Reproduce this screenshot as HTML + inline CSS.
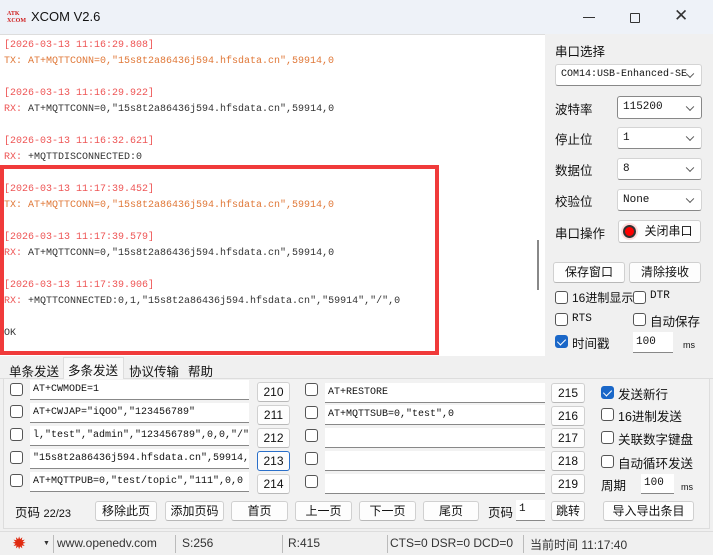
<!DOCTYPE html>
<html><head><meta charset="utf-8"><style>
*{box-sizing:border-box;margin:0;padding:0}
body{width:713px;height:555px;background:#f0f0f0;position:relative;overflow:hidden;font-family:"Liberation Sans","Noto Sans CJK SC",sans-serif;font-size:12px;color:#111}
.a{position:absolute;white-space:nowrap}
#title{left:0;top:0;width:713px;height:34px;background:#eef2f8}
#log{left:0;top:34px;width:545px;height:322px;background:#fff;border-top:1px solid #ddd;font-family:"Liberation Mono","Noto Sans CJK SC",monospace;font-size:10px;line-height:16px;padding:3px 0 0 4px}
#log div{height:16px;white-space:nowrap}
.ts{color:#ee5555}.tx{color:#e07838}.rx{color:#ee5555}.d{color:#333}
.btn{position:absolute;background:#fdfdfd;border:1px solid #d0d0d0;border-bottom-color:#b8b8b8;border-radius:3px;text-align:center;font-size:12px;font-family:"Liberation Sans","Noto Sans CJK SC",sans-serif}
.cmb{position:absolute;background:#fff;border:1px solid #d4d4d4;border-bottom-color:#888;border-radius:3px;font-family:"Liberation Mono","Noto Sans CJK SC",monospace;font-size:11px;padding-left:5px}
.cmb:after{content:"";position:absolute;right:8px;top:50%;width:5px;height:5px;border-right:1px solid #555;border-bottom:1px solid #555;transform:translateY(-70%) rotate(45deg)}
.cb{position:absolute;width:13px;height:13px;border:1px solid #555;border-radius:3px;background:#fff}
.cb.on{background:#1a67c8;border-color:#1a67c8}
.cb.on:after{content:"";position:absolute;left:3px;top:1px;width:4px;height:7px;border-right:1.5px solid #fff;border-bottom:1.5px solid #fff;transform:rotate(45deg)}
.inp{position:absolute;background:#fff;border-bottom:1px solid #888;font-family:"Liberation Mono","Noto Sans CJK SC",monospace;font-size:10px;padding-left:3px;overflow:hidden}
.lbl{position:absolute;white-space:nowrap;font-size:12.5px}
</style></head><body>
<div class="a" id="title"></div>
<div class="a" style="left:7px;top:11px;width:14px;height:14px;font-size:6px;line-height:7px;color:#d02020;font-weight:bold;font-family:'Liberation Serif',serif">ATK<br>XCOM</div>
<div class="a" style="left:31px;top:9px;font-size:13px">XCOM V2.6</div>
<div class="a" style="left:583px;top:17px;width:12px;height:1px;background:#333"></div>
<div class="a" style="left:630px;top:13px;width:10px;height:10px;border:1px solid #333;border-radius:1px"></div>
<div class="a" style="left:674px;top:6px;font-size:17px;color:#333">✕</div>

<div class="a" id="log">
<div class="ts">[2026-03-13 11:16:29.808]</div>
<div class="tx">TX: AT+MQTTCONN=0,"15s8t2a86436j594.hfsdata.cn",59914,0</div>
<div></div>
<div class="ts">[2026-03-13 11:16:29.922]</div>
<div class="d"><span class="rx">RX:</span> AT+MQTTCONN=0,"15s8t2a86436j594.hfsdata.cn",59914,0</div>
<div></div>
<div class="ts">[2026-03-13 11:16:32.621]</div>
<div class="d"><span class="rx">RX:</span> +MQTTDISCONNECTED:0</div>
<div></div>
<div class="ts">[2026-03-13 11:17:39.452]</div>
<div class="tx">TX: AT+MQTTCONN=0,"15s8t2a86436j594.hfsdata.cn",59914,0</div>
<div></div>
<div class="ts">[2026-03-13 11:17:39.579]</div>
<div class="d"><span class="rx">RX:</span> AT+MQTTCONN=0,"15s8t2a86436j594.hfsdata.cn",59914,0</div>
<div></div>
<div class="ts">[2026-03-13 11:17:39.906]</div>
<div class="d"><span class="rx">RX:</span> +MQTTCONNECTED:0,1,"15s8t2a86436j594.hfsdata.cn","59914","/",0</div>
<div></div>
<div class="d">OK</div>
</div>
<div class="a" style="left:537px;top:240px;width:2px;height:50px;background:#888"></div>
<div class="a" style="left:0;top:165px;width:439px;height:190px;border:4px solid #f03a3a"></div>

<!-- right panel -->
<div class="lbl" style="left:555px;top:41px">串口选择</div>
<div class="cmb" style="left:555px;top:64px;width:147px;height:22px;line-height:20px;font-size:10px">COM14:USB-Enhanced-SE</div>
<div class="lbl" style="left:555px;top:99px">波特率</div>
<div class="cmb" style="left:617px;top:96px;width:85px;height:23px;line-height:21px;border-color:#888">115200</div>
<div class="lbl" style="left:555px;top:129px">停止位</div>
<div class="cmb" style="left:617px;top:127px;width:85px;height:22px;line-height:20px">1</div>
<div class="lbl" style="left:555px;top:160px">数据位</div>
<div class="cmb" style="left:617px;top:158px;width:85px;height:22px;line-height:20px">8</div>
<div class="lbl" style="left:555px;top:191px">校验位</div>
<div class="cmb" style="left:617px;top:189px;width:85px;height:22px;line-height:20px">None</div>
<div class="lbl" style="left:555px;top:223px">串口操作</div>
<div class="btn" style="left:618px;top:220px;width:83px;height:23px;line-height:21px;padding-left:18px">关闭串口</div>
<div class="a" style="left:623px;top:225px;width:13px;height:13px;border-radius:50%;background:#f00;border:2px solid #333;box-shadow:0 0 0 2px #fdd"></div>
<div class="btn" style="left:553px;top:262px;width:72px;height:21px;line-height:19px">保存窗口</div>
<div class="btn" style="left:629px;top:262px;width:72px;height:21px;line-height:19px">清除接收</div>
<div class="cb" style="left:555px;top:291px"></div><div class="lbl" style="left:572px;top:289px;font-size:12px">16进制显示</div>
<div class="cb" style="left:633px;top:291px"></div><div class="lbl" style="left:650px;top:290px;font-size:11px;font-family:'Liberation Mono',monospace">DTR</div>
<div class="cb" style="left:555px;top:313px"></div><div class="lbl" style="left:572px;top:313px;font-size:11px;font-family:'Liberation Mono',monospace">RTS</div>
<div class="cb" style="left:633px;top:313px"></div><div class="lbl" style="left:650px;top:311px">自动保存</div>
<div class="cb on" style="left:555px;top:335px"></div><div class="lbl" style="left:572px;top:333px">时间戳</div>
<div class="inp" style="left:633px;top:332px;width:40px;height:21px;line-height:20px;font-size:11px">100</div>
<div class="lbl" style="left:683px;top:340px;font-size:9px">ms</div>

<!-- tabs -->
<div class="a" style="left:0;top:378px;width:713px;height:1px;background:#ddd"></div>
<div class="lbl" style="left:9px;top:361px">单条发送</div>
<div class="a" style="left:63px;top:357px;width:61px;height:22px;background:#f8f8f8;border:1px solid #ddd;border-bottom:none"></div>
<div class="lbl" style="left:68px;top:360px">多条发送</div>
<div class="lbl" style="left:129px;top:361px">协议传输</div>
<div class="lbl" style="left:188px;top:361px">帮助</div>
<div class="a" style="left:3px;top:379px;width:707px;height:150px;border:1px solid #ddd;border-top:none;background:#f2f2f2"></div>

<!-- rows -->
<div class="cb" style="left:10px;top:383px"></div><div class="inp" style="left:30px;top:380px;width:219px;height:20px;line-height:19px">AT+CWMODE=1</div><div class="btn" style="left:257px;top:382px;width:33px;height:20px;line-height:18px">210</div>
<div class="cb" style="left:10px;top:405px"></div><div class="inp" style="left:30px;top:403px;width:219px;height:20px;line-height:19px">AT+CWJAP="iQOO","123456789"</div><div class="btn" style="left:257px;top:405px;width:33px;height:20px;line-height:18px">211</div>
<div class="cb" style="left:10px;top:428px"></div><div class="inp" style="left:30px;top:426px;width:219px;height:20px;line-height:19px">l,"test","admin","123456789",0,0,"/"</div><div class="btn" style="left:257px;top:428px;width:33px;height:20px;line-height:18px">212</div>
<div class="cb" style="left:10px;top:451px"></div><div class="inp" style="left:30px;top:449px;width:219px;height:20px;line-height:19px">"15s8t2a86436j594.hfsdata.cn",59914,</div><div class="btn" style="left:257px;top:451px;width:33px;height:20px;line-height:18px;border-color:#2a6fc9">213</div>
<div class="cb" style="left:10px;top:474px"></div><div class="inp" style="left:30px;top:472px;width:219px;height:20px;line-height:19px">AT+MQTTPUB=0,"test/topic","111",0,0</div><div class="btn" style="left:257px;top:474px;width:33px;height:20px;line-height:18px">214</div>

<div class="cb" style="left:305px;top:383px"></div><div class="inp" style="left:325px;top:383px;width:220px;height:20px;line-height:19px">AT+RESTORE</div><div class="btn" style="left:551px;top:383px;width:34px;height:20px;line-height:18px">215</div>
<div class="cb" style="left:305px;top:406px"></div><div class="inp" style="left:325px;top:405px;width:220px;height:20px;line-height:19px">AT+MQTTSUB=0,"test",0</div><div class="btn" style="left:551px;top:406px;width:34px;height:20px;line-height:18px">216</div>
<div class="cb" style="left:305px;top:429px"></div><div class="inp" style="left:325px;top:428px;width:220px;height:20px"></div><div class="btn" style="left:551px;top:428px;width:34px;height:20px;line-height:18px">217</div>
<div class="cb" style="left:305px;top:452px"></div><div class="inp" style="left:325px;top:451px;width:220px;height:20px"></div><div class="btn" style="left:551px;top:451px;width:34px;height:20px;line-height:18px">218</div>
<div class="cb" style="left:305px;top:475px"></div><div class="inp" style="left:325px;top:474px;width:220px;height:20px"></div><div class="btn" style="left:551px;top:474px;width:34px;height:20px;line-height:18px">219</div>

<div class="cb on" style="left:601px;top:386px"></div><div class="lbl" style="left:618px;top:384px">发送新行</div>
<div class="cb" style="left:601px;top:408px"></div><div class="lbl" style="left:618px;top:406px">16进制发送</div>
<div class="cb" style="left:601px;top:431px"></div><div class="lbl" style="left:618px;top:429px">关联数字键盘</div>
<div class="cb" style="left:601px;top:455px"></div><div class="lbl" style="left:618px;top:453px">自动循环发送</div>
<div class="lbl" style="left:601px;top:475px">周期</div>
<div class="inp" style="left:641px;top:474px;width:33px;height:20px;line-height:19px;font-size:11px">100</div>
<div class="lbl" style="left:681px;top:482px;font-size:9px">ms</div>

<!-- bottom buttons -->
<div class="lbl" style="left:15px;top:502px">页码 <span style="font-size:11px">22/23</span></div>
<div class="btn" style="left:95px;top:501px;width:62px;height:20px;line-height:18px">移除此页</div>
<div class="btn" style="left:165px;top:501px;width:59px;height:20px;line-height:18px">添加页码</div>
<div class="btn" style="left:231px;top:501px;width:57px;height:20px;line-height:18px">首页</div>
<div class="btn" style="left:295px;top:501px;width:57px;height:20px;line-height:18px">上一页</div>
<div class="btn" style="left:359px;top:501px;width:57px;height:20px;line-height:18px">下一页</div>
<div class="btn" style="left:423px;top:501px;width:56px;height:20px;line-height:18px">尾页</div>
<div class="lbl" style="left:488px;top:502px">页码</div>
<div class="inp" style="left:516px;top:500px;width:29px;height:21px;line-height:19px;font-size:11px">1</div>
<div class="btn" style="left:551px;top:501px;width:34px;height:20px;line-height:18px">跳转</div>
<div class="btn" style="left:603px;top:501px;width:91px;height:20px;line-height:18px">导入导出条目</div>

<!-- status bar -->
<div class="a" style="left:0;top:531px;width:713px;height:1px;background:#ddd"></div>
<div class="a" style="left:12px;top:534px;font-size:17px;color:#e02a10">✹</div>
<div class="a" style="left:43px;top:540px;font-size:7px;color:#333">▼</div>
<div class="a" style="left:53px;top:535px;width:1px;height:18px;background:#bbb"></div>
<div class="lbl" style="left:57px;top:536px;font-size:12px;color:#333">www.openedv.com</div>
<div class="a" style="left:175px;top:535px;width:1px;height:18px;background:#bbb"></div>
<div class="lbl" style="left:182px;top:536px;font-size:12px;color:#333">S:256</div>
<div class="a" style="left:282px;top:535px;width:1px;height:18px;background:#bbb"></div>
<div class="lbl" style="left:288px;top:536px;font-size:12px;color:#333">R:415</div>
<div class="a" style="left:387px;top:535px;width:1px;height:18px;background:#bbb"></div>
<div class="lbl" style="left:390px;top:536px;font-size:12px;color:#333">CTS=0 DSR=0 DCD=0</div>
<div class="a" style="left:523px;top:535px;width:1px;height:18px;background:#bbb"></div>
<div class="lbl" style="left:530px;top:536px;font-size:12px;color:#333">当前时间 11:17:40</div>
</body></html>
